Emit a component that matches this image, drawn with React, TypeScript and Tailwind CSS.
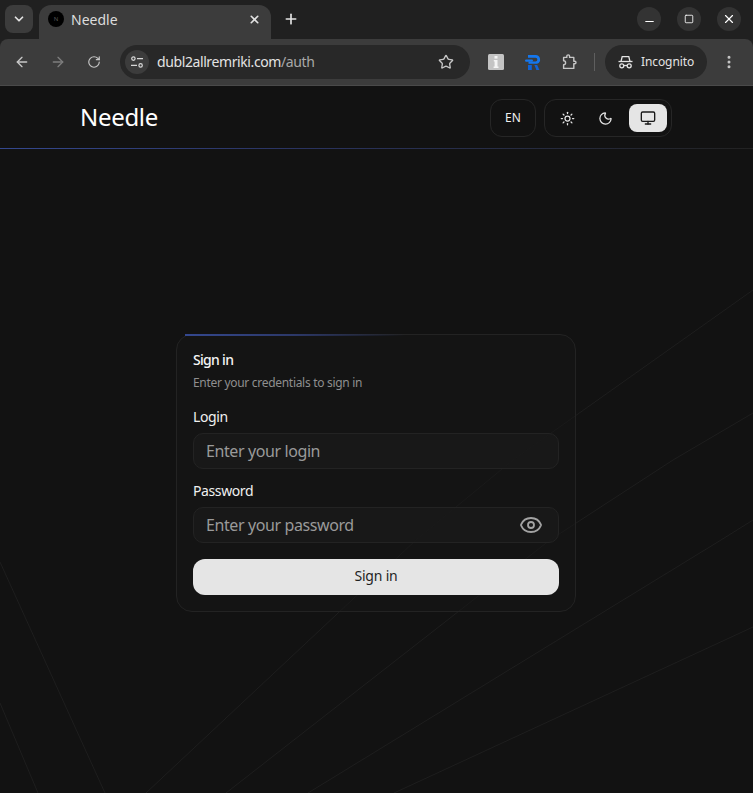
import React from 'react';
import { ArrowLeft, ArrowRight, ChevronDown, EllipsisVertical, Eye, Minus, Monitor, Moon, Plus, RotateCw, Square, Star, Sun, X } from 'lucide-react';

const font = 'font-["Noto_Sans","Open_Sans",sans-serif]';

function WindowButton({ children }: { children: React.ReactNode }) {
  return <div className="flex h-6 w-6 items-center justify-center rounded-full bg-[#333333] text-white">{children}</div>;
}

function SiteIcon() {
  return (
    <svg width="14" height="14" viewBox="0 0 14 14" fill="none" stroke="#d8d8d8" strokeWidth="1.2">
      <circle cx="3.4" cy="3.6" r="1.7" />
      <path d="M7 3.6h6M1 10.4h6" />
      <circle cx="10.6" cy="10.4" r="1.7" />
    </svg>
  );
}

function InfoExtension() {
  return (
    <svg width="16" height="16" viewBox="0 0 16 16">
      <rect width="16" height="16" rx="1.5" fill="#c4c4c4" />
      <rect x="6.5" y="2" width="3" height="2.6" fill="#f4f4f4" />
      <path d="M5.8 6h3.7v6.4h1v1.6H5.6v-1.6h1V7.6h-.8z" fill="#f4f4f4" />
    </svg>
  );
}

function RExtension() {
  return (
    <svg width="17" height="17" viewBox="0 0 17 17">
      <path d="M4 1h7.5a4.5 4.5 0 0 1 1.7 8.7H4.5V7.4h7a1.7 1.7 0 0 0 0-3.7H4z" fill="#1477ee" />
      <rect x="1" y="5.4" width="8" height="2.4" rx="1.2" fill="#1477ee" />
      <rect x="4" y="11" width="3.8" height="5" fill="#0f62d6" />
      <path d="M10.4 11h2.8l2.2 5h-3z" fill="#0f62d6" />
    </svg>
  );
}

function PuzzleIcon() {
  return (
    <svg width="16" height="16" viewBox="0 0 16 16" fill="none" stroke="#c7c7c7" strokeWidth="1.4" strokeLinejoin="round">
      <path d="M2.6 3.4h3.2V2.3a1.4 1.4 0 0 1 2.8 0v1.1h4.2v3.8h.9a1.3 1.3 0 0 1 0 2.6h-.9v4.6H2.6v-3.6a2 2 0 0 0 0-4V3.4z" />
    </svg>
  );
}

function IncognitoIcon() {
  return (
    <svg width="15" height="14" viewBox="0 0 15 14" fill="none" stroke="#e3e3e3" strokeWidth="1.3">
      <path d="M0.5 6.5h14" />
      <path d="M3 6.5 4.2 1.6h6.6L12 6.5" />
      <circle cx="3.8" cy="10.8" r="2" />
      <circle cx="11.2" cy="10.8" r="2" />
      <path d="M5.8 10.5h3.4" />
    </svg>
  );
}

function BrowserChrome() {
  return (
    <div className={`${font} shrink-0`}>
      <div className="flex h-[39px] items-end bg-[#202020] pl-[5px] pr-[12px]">
        <div className="mb-[6px] flex h-7 w-7 items-center justify-center rounded-lg bg-[#3c3c3c] text-[#e3e3e3]">
          <ChevronDown size={14} strokeWidth={3} />
        </div>
        <div className="ml-[6px] flex h-[34px] w-[232px] items-center rounded-t-xl bg-[#3c3c3c] pb-[6px] pl-[9px] pr-[10px]">
          <div className="flex h-4 w-4 items-center justify-center rounded-full bg-black text-[6px] text-[#555555]">N</div>
          <span className="ml-[7px] text-[14px] text-[#dcdcdc]">Needle</span>
          <X size={13} strokeWidth={3} className="ml-auto text-[#e3e3e3]" />
        </div>
        <div className="mb-[6px] ml-[6px] flex h-7 w-7 items-center justify-center text-[#e3e3e3]">
          <Plus size={16} strokeWidth={2.5} />
        </div>
        <div className="mb-[8px] ml-auto flex gap-4">
          <WindowButton><Minus size={13} strokeWidth={2} className="mt-[5px]" /></WindowButton>
          <WindowButton><Square size={10} strokeWidth={2} /></WindowButton>
          <WindowButton><X size={14} strokeWidth={2} /></WindowButton>
        </div>
      </div>
      <div className="flex h-[47px] items-center rounded-t-lg border-b border-[#4a4a4a] bg-[#3c3c3c] pl-[14px] pr-[16px]">
        <ArrowLeft size={16} strokeWidth={2} className="text-[#c7c7c7]" />
        <ArrowRight size={16} strokeWidth={2} className="ml-5 text-[#7d7d7d]" />
        <RotateCw size={14} strokeWidth={2} className="ml-[21px] text-[#c7c7c7]" />
        <div className="ml-[19px] flex h-[34px] w-[350px] items-center rounded-full bg-[#282828] pl-[5px] pr-[16px]">
          <div className="flex h-6 w-6 items-center justify-center rounded-full bg-[#3c3c3c]"><SiteIcon /></div>
          <span className="ml-2 pb-[2px] text-[14px] tracking-[-0.4px] text-[#e3e3e3]">dubl2allremriki.com<span className="text-[#a8a8a8]">/auth</span></span>
          <Star size={16} strokeWidth={2} className="ml-auto text-[#c7c7c7]" />
        </div>
        <div className="ml-[18px]"><InfoExtension /></div>
        <div className="ml-[20px]"><RExtension /></div>
        <div className="ml-[20px]"><PuzzleIcon /></div>
        <div className="ml-[17px] h-[18px] w-px bg-[#5f5f5f]" />
        <div className="ml-[10px] flex h-[34px] w-[102px] items-center rounded-full bg-[#282828] pl-[13px]">
          <IncognitoIcon />
          <span className="ml-[8px] text-[12px] tracking-[-0.1px] text-[#e3e3e3]">Incognito</span>
        </div>
        <EllipsisVertical size={16} strokeWidth={2.5} className="ml-auto text-[#c7c7c7]" />
      </div>
    </div>
  );
}

function BackgroundLines() {
  return (
    <svg className="absolute inset-0 h-full w-full" viewBox="0 0 753 707" preserveAspectRatio="none" fill="none" stroke="#1e1e1e" strokeWidth="1">
      <path d="M753 204 513 374 416 454 146 707" />
      <path d="M753 327 673 374 550 454 226 707" />
      <path d="M753 434 721 454 308 707" />
      <path d="M753 541 394 707" />
      <path d="M0 476 105 707" />
      <path d="M0 617 38 707" />
    </svg>
  );
}

function Field({ label, placeholder, icon }: { label: string; placeholder: string; icon?: React.ReactNode }) {
  return (
    <div>
      <label className="block text-[14px] leading-5 tracking-[-0.4px] text-[#f0f0f0]">{label}</label>
      <div className="mt-[6px] flex h-9 items-center rounded-[10px] border border-[#232323] bg-[#1a1a1a]/70 pl-3 pr-[15px]">
        <span className="text-[16px] tracking-[-0.4px] text-[#9a9a9a]">{placeholder}</span>
        {icon}
      </div>
    </div>
  );
}

export default function App() {
  return (
    <div className={`${font} flex h-[793px] w-[753px] flex-col overflow-hidden bg-[#202020]`}>
      <BrowserChrome />
      <div className="relative flex flex-1 flex-col bg-[#121212]">
        <BackgroundLines />
        <header className="relative flex h-[64px] shrink-0 items-center justify-between pl-20 pr-[81px]">
          <h1 className="pb-[2px] text-[24px] tracking-[-0.3px] text-white">Needle</h1>
          <div className="flex gap-2">
            <div className="flex h-[38px] w-[46px] items-center justify-center rounded-xl border border-[#262626] text-[12px] text-[#f0f0f0]">EN</div>
            <div className="flex h-[38px] w-[128px] items-center rounded-xl border border-[#262626] pl-[3px]">
              <div className="flex h-7 w-[38px] items-center justify-center text-[#e5e5e5]"><Sun size={15} /></div>
              <div className="flex h-7 w-[38px] items-center justify-center text-[#e5e5e5]"><Moon size={15} /></div>
              <div className="ml-[5px] flex h-7 w-[38px] items-center justify-center rounded-lg bg-[#e5e5e5] text-[#1a1a1a]"><Monitor size={16} /></div>
            </div>
          </div>
          <div className="absolute inset-x-0 bottom-px h-px bg-gradient-to-r from-[#34488f] via-[#2a3360] via-40% to-[#222222]" />
        </header>
        <main className="relative flex flex-1 items-center justify-center pr-px pt-[3px]">
          <div className="relative w-[400px] rounded-2xl border border-[#232323] bg-[#161616]/50 px-4 pb-4 pt-[15px]">
            <div className="absolute left-2 right-[170px] -top-px h-[2px] bg-gradient-to-r from-[#34488f] via-[#2c3868] to-transparent" />
            <h2 className="text-[14px] font-medium leading-5 tracking-[-0.7px] text-[#f5f5f5]">Sign in</h2>
            <p className="mt-[3px] text-[12px] leading-5 tracking-[-0.3px] text-[#8f8f8f]">Enter your credentials to sign in</p>
            <div className="mt-[14px] flex flex-col gap-[12px]">
              <Field label="Login" placeholder="Enter your login" />
              <Field label="Password" placeholder="Enter your password" icon={<Eye size={24} strokeWidth={1.8} className="ml-auto text-[#a3a3a3]" />} />
            </div>
            <button className="mt-4 h-9 w-full rounded-xl bg-[#e5e5e5] pb-[3px] text-[14px] tracking-[-0.2px] text-[#1f1f1f]">Sign in</button>
          </div>
        </main>
      </div>
    </div>
  );
}
